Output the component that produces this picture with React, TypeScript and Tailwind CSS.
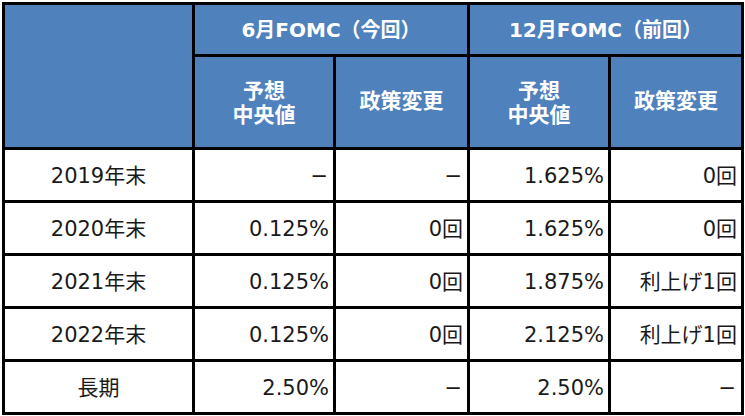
import React from 'react';

const font = { fontFamily: '"DejaVu Sans", "Noto Sans CJK JP", sans-serif' };

const rows = [
  { label: '2019年末', cells: ['−', '−', '1.625%', '0回'] },
  { label: '2020年末', cells: ['0.125%', '0回', '1.625%', '0回'] },
  { label: '2021年末', cells: ['0.125%', '0回', '1.875%', '利上げ1回'] },
  { label: '2022年末', cells: ['0.125%', '0回', '2.125%', '利上げ1回'] },
  { label: '長期', cells: ['2.50%', '−', '2.50%', '−'] },
];

function Head({ children, className = '' }: { children: React.ReactNode; className?: string }) {
  return (
    <div className={`bg-[#4f81bd] text-white font-bold flex items-center justify-center text-center ${className}`}>
      {children}
    </div>
  );
}

function Two() {
  return (
    <div className="flex flex-col items-center">
      <span className="leading-[24px]">予想</span>
      <span className="leading-[24px]">中央値</span>
    </div>
  );
}

export default function App() {
  return (
    <div className="min-h-screen bg-white p-[2px]" style={font}>
      <div className="w-fit grid grid-cols-[187px_138px_131px_138px_130px] grid-rows-[49px_90px_repeat(5,50px)] gap-[3px] bg-black p-[3px]">
        <Head className="row-span-2">{''}</Head>
        <Head className="col-span-2 text-[20px]">6月FOMC（今回）</Head>
        <Head className="col-span-2 text-[20px]">12月FOMC（前回）</Head>
        <Head className="text-[21px] pt-[2px]"><Two /></Head>
        <Head className="text-[21px]">政策変更</Head>
        <Head className="text-[21px] pt-[2px]"><Two /></Head>
        <Head className="text-[21px]">政策変更</Head>
        {rows.map((r) => (
          <React.Fragment key={r.label}>
            <div className="bg-white flex items-center justify-center text-[21px] text-[#1a1a1a] pt-[3px]">{r.label}</div>
            {r.cells.map((c, i) => (
              <div
                key={i}
                className={`bg-white flex items-center justify-end text-[21px] text-[#1a1a1a] pt-[3px] ${c === '−' ? 'pr-[5px]' : 'pr-[4px]'}`}
              >
                {c}
              </div>
            ))}
          </React.Fragment>
        ))}
      </div>
    </div>
  );
}
